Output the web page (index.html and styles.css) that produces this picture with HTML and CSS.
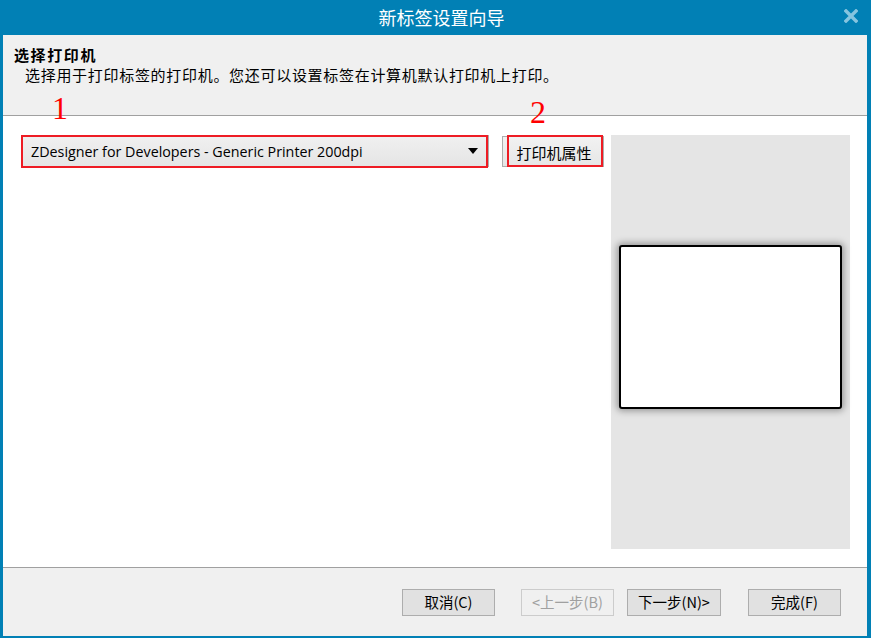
FILE: index.html
```html
<!DOCTYPE html>
<html lang="zh-CN">
<head>
<meta charset="utf-8">
<title>新标签设置向导</title>
<link rel="stylesheet" href="styles.css">
</head>
<body>
<div class="window">
  <div class="titlebar">
    <span class="title">新标签设置向导</span>
    <svg class="close" width="14" height="14" viewBox="0 0 14 14"><path d="M2 2 L12 12 M12 2 L2 12" stroke="#86c4df" stroke-width="3.4" stroke-linecap="square"/></svg>
  </div>
  <div class="frame">
    <div class="header">
      <div class="h-title">选择打印机</div>
      <div class="h-sub">选择用于打印标签的打印机。您还可以设置标签在计算机默认打印机上打印。</div>
    </div>
    <div class="content">
      <div class="combo">
        <span class="combo-text">ZDesigner for Developers - Generic Printer 200dpi</span>
        <svg class="arrow" width="10" height="6" viewBox="0 0 10 6"><path d="M0 0 H10 L5 6 Z" fill="#000"/></svg>
        <span class="mark mark1"></span>
        <span class="num num1">1</span>
      </div>
      <div class="prop-btn">
        <span class="prop-text">打印机属性</span>
        <span class="mark mark2"></span>
        <span class="num num2">2</span>
      </div>
      <div class="preview">
        <div class="card"></div>
      </div>
    </div>
    <div class="footer">
      <button class="btn b-cancel">取消(C)</button>
      <button class="btn b-prev" disabled>&lt;上一步(B)</button>
      <button class="btn b-next">下一步(N)&gt;</button>
      <button class="btn b-finish">完成(F)</button>
    </div>
  </div>
</div>
</body>
</html>
```

FILE: styles.css
```css
html, body {
  margin: 0;
  padding: 0;
}
body {
  width: 871px;
  height: 638px;
  overflow: hidden;
  font-family: "Noto Sans CJK SC", "Noto Sans", sans-serif;
  color: #000;
}
.window {
  width: 871px;
  height: 638px;
  background: #0180b5;
  display: flex;
  flex-direction: column;
  box-sizing: border-box;
  padding: 0 4px 2px 3px;
}
.titlebar {
  height: 35px;
  flex: none;
  display: flex;
  align-items: center;
  justify-content: center;
  position: relative;
  margin: 0 -4px 0 -3px;
}
.title {
  color: #fff;
  font-size: 18px;
  line-height: 1;
  padding-left: 12px;
  margin-top: -2px;
}
.close {
  position: absolute;
  right: 13px;
  top: 9px;
}
.frame {
  flex: 1;
  display: flex;
  flex-direction: column;
  background: #f0f0f0;
}
.header {
  height: 81px;
  flex: none;
  box-sizing: border-box;
  border-bottom: 1px solid #a0a0a0;
  padding: 10px 0 0 11px;
}
.h-title {
  font-weight: bold;
  font-size: 15px;
  line-height: 20px;
  letter-spacing: 1.6px;
}
.h-sub {
  font-size: 15px;
  line-height: 20px;
  padding-left: 11px;
  letter-spacing: 0.7px;
}
.content {
  height: 452px;
  flex: none;
  box-sizing: border-box;
  background: #fff;
  border-bottom: 1px solid #a0a0a0;
  display: flex;
  align-items: flex-start;
  padding: 19px 17px 0 19px;
}
.combo {
  position: relative;
  width: 467px;
  height: 32px;
  box-sizing: border-box;
  border: 1px solid #adadad;
  background: linear-gradient(#f0f0f0, #e5e5e5);
  display: flex;
  align-items: center;
  padding: 0 9px 0 8px;
  flex: none;
}
.combo-text {
  flex: 1;
  font-family: "Open Sans", "Noto Sans", sans-serif;
  font-size: 14.3px;
  white-space: nowrap;
}
.arrow {
  margin-right: 1px;
}
.mark {
  position: absolute;
  border: 2px solid #ee1c24;
  box-sizing: border-box;
}
.mark1 {
  left: -2px;
  top: -1px;
  width: 467px;
  height: 33px;
}
.num {
  position: absolute;
  color: #ff0000;
  font-family: "Liberation Serif", serif;
  font-size: 32px;
  line-height: 1;
}
.num1 {
  left: 29px;
  top: -44px;
}
.num2 {
  left: 27px;
  top: -41px;
}
.prop-btn {
  position: relative;
  margin-left: 13px;
  margin-top: 1px;
  width: 102px;
  height: 31px;
  box-sizing: border-box;
  border: 1px solid #adadad;
  background: linear-gradient(#f2f2f2, #e6e6e6);
  display: flex;
  align-items: center;
  justify-content: center;
  flex: none;
}
.prop-text {
  font-size: 15px;
  padding-left: 2px;
  padding-top: 1px;
}
.mark2 {
  left: 4px;
  top: -2px;
  width: 96px;
  height: 32px;
}
.preview {
  margin-left: 7px;
  width: 239px;
  height: 414px;
  background: #e5e5e5;
  flex: none;
  box-sizing: border-box;
  padding: 110px 8px 0 8px;
}
.card {
  height: 164px;
  background: #fff;
  border: 2px solid #000;
  border-radius: 3px;
  box-sizing: border-box;
  box-shadow: 0 0 7px 2px rgba(0,0,0,0.35);
}
.footer {
  flex: 1;
  display: flex;
  align-items: flex-start;
  justify-content: flex-end;
  padding: 21px 26px 0 0;
}
.btn {
  width: 93px;
  height: 27px;
  box-sizing: border-box;
  border: 1px solid #adadad;
  background: #e1e1e1;
  font-family: "Noto Sans CJK SC", "Noto Sans", sans-serif;
  font-size: 14.5px;
  color: #000;
  padding: 0;
  margin: 0;
  line-height: 1;
}
.b-prev {
  margin-left: 26px;
  background: #f0f0f0;
  border-color: #cccccc;
  color: #a0a0a0;
}
.b-next {
  margin-left: 13px;
  width: 94px;
}
.b-finish {
  margin-left: 27px;
}
```
